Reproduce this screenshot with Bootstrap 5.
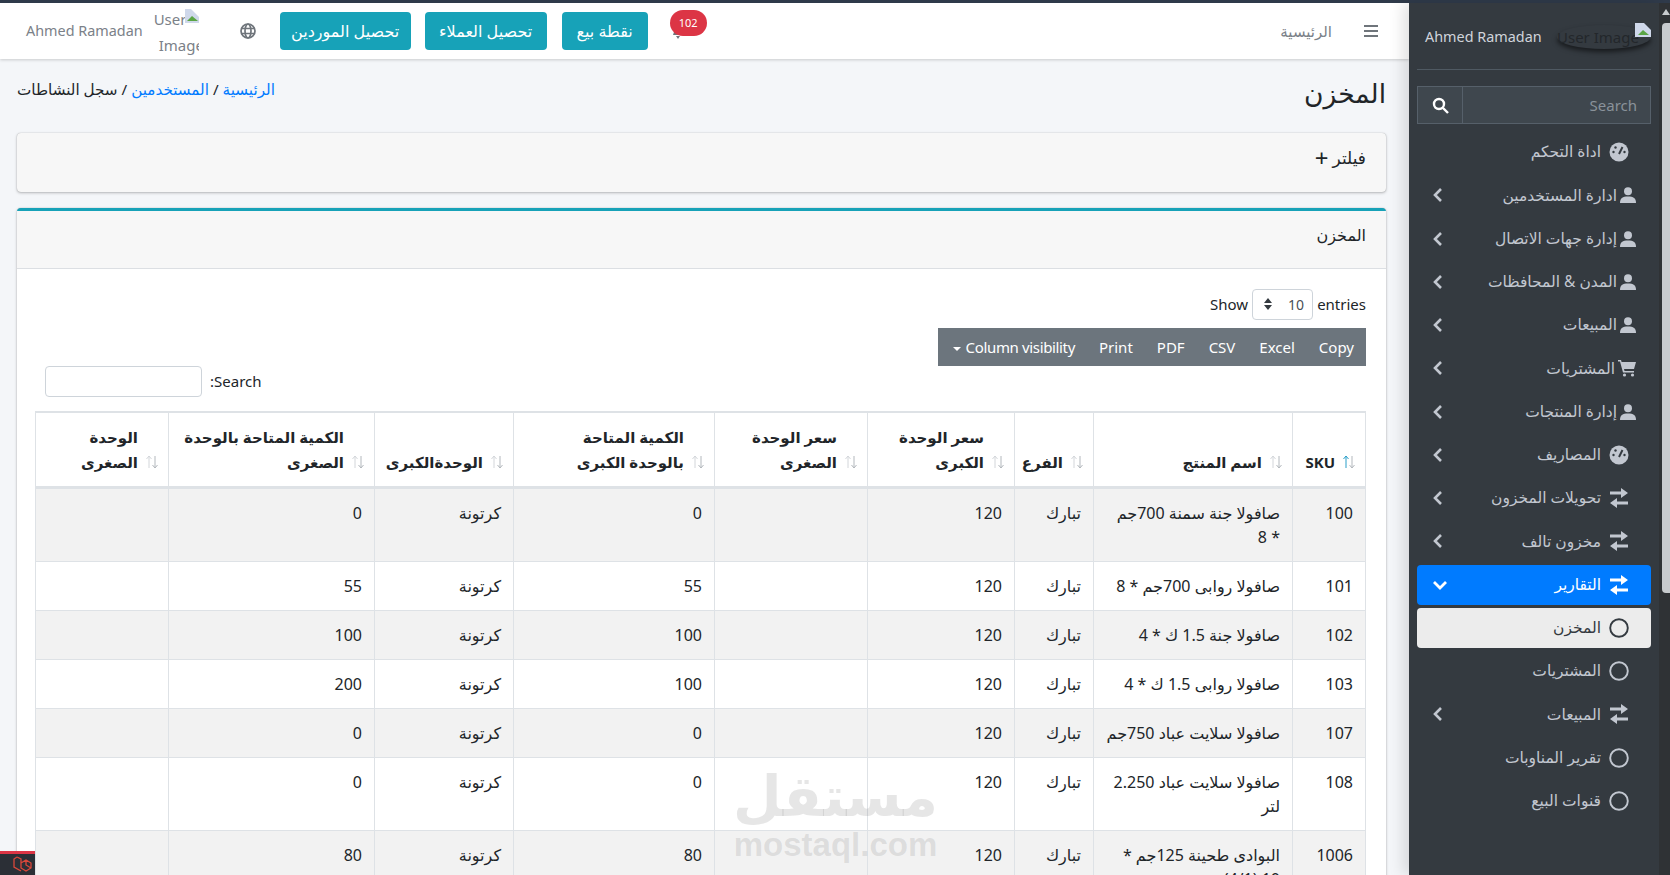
<!doctype html>
<html lang="ar" dir="rtl">
<head>
<meta charset="utf-8">
<link rel="stylesheet" href="https://cdn.jsdelivr.net/npm/bootstrap@5.3.0/dist/css/bootstrap.min.css">
<style>
html,body{height:100%;overflow:hidden}
body{font-family:"Noto Sans","DejaVu Sans",sans-serif;font-size:15px;color:#212529;background:#f4f6f9}
.ltr{direction:ltr}
.topline{height:3px;background:#2f3a4a}
.shell{height:872px}
.fakebar{width:11px;background:#2f3235;flex:none;position:relative;z-index:6}
.fakebar i{position:absolute;top:20px;left:3px;width:8px;height:570px;background:#c8cbce;border-radius:4px 0 0 4px}
.fakebar u{position:absolute;top:6px;left:3px;border:4px solid transparent;border-bottom:6px solid #c8cbce;border-top:0}
.side{width:250px;background:#343a40;flex:none;color:#c2c7d0;padding:0 8px;position:relative;z-index:5;box-shadow:-6px 0 14px rgba(0,0,0,.12)}
.side-user{height:67px;border-bottom:1px solid #4f5962;padding:2px 0 0 0}
.side-user .who{color:#d0d4db;font-size:14.4px;direction:ltr}
.side-alt{width:94px;height:24px;border-radius:50%;box-shadow:0 3px 5px rgba(0,0,0,.55);font-size:15px;color:#23272b;white-space:nowrap;position:relative}
.side-alt svg{position:absolute;right:0;top:-2px}
.side-search{height:38px;margin:16px 0 8px;border:1px solid #56606a;background:#3f474e;color:#8a929a}
.side-search .sb{width:45px;flex:none;border-right:1px solid #56606a}
.side-search .st{padding:0 13px 0 0;font-size:15px;text-align:left;direction:ltr;flex:1}
.sitem{height:40px;margin-bottom:3.25px;padding:0 22px 0 16px;border-radius:4px;color:#c2c7d0;font-size:15.5px}
.sitem svg.ic{flex:none}
.sitem .lbl{margin-right:8px;flex:1;white-space:nowrap}
.sitem.kindu{padding-right:15px}
.sitem.kindu .lbl{margin-right:3px}
.sitem.on{background:#007bff;color:#fff}
.sitem.cur{background:#ececec;color:#343a40}
.main{flex:1;min-width:0;position:relative;overflow:hidden}
.tnav{height:56px;background:#fff;box-shadow:0 1px 3px rgba(0,0,0,.18);padding:0 30px 0 26px;position:relative;z-index:2}
.tnav .home{color:#7b8188;margin-right:32px;font-size:15px}
.tbtn{background:#17a2b8;color:#fff;border-radius:4px;height:38px;padding:0;font-size:16px;border:0}
.tb1{width:86px;margin-left:15px}.tb2{width:122px;margin-left:14px}.tb3{width:131px}
.bell{width:37px;height:26px;position:relative;margin-left:22px}
.bellbadge{background:#dc3545;color:#fff;font-size:11px;height:26px;width:37px;border-radius:13px;position:absolute;left:0;top:-8px}
.bellmini{position:absolute;left:3px;top:9px}
.globe{margin:0 24px 0 41px}
.pagehd{padding:19px 23px 0 17px;height:74px}
.pagehd h1{font-size:26.5px;font-weight:400;margin:0;color:#212529}
.crumb{font-size:15.2px;color:#212529;margin-top:0}
.crumb a{color:#007bff;text-decoration:none}
.boxc{margin:0 23px 16px 17px;background:#fff;border-radius:4px;box-shadow:0 0 1px rgba(0,0,0,.3),0 1px 3px rgba(0,0,0,.25)}
.filterbox{height:59px;background:#f7f7f7;padding:0 20px 9px;font-size:17px}
.tealbox{border-top:3px solid #17a2b8}
.boxhead{height:58px;background:#f7f7f7;border-bottom:1px solid #dcdfe3;padding:0 20px 10px;font-size:16px}
.boxbody{padding:17px 20px 0 19px}
.lenrow{height:36px;font-size:15px}
.lensel{width:61px;height:31px;border:1px solid #ced4da;border-radius:4px;margin:0 4px;padding:0 8px 0 11px;color:#495057;font-size:14px}
.dtbtns{background:#6c757d;color:#fff;height:38px;width:428px;margin:6px 0 0 0;padding:0 12px;font-size:15px;gap:24px;white-space:nowrap}
.colvis{letter-spacing:-.35px}
.caretd{display:inline-block;width:0;height:0;border:4px solid transparent;border-top-color:#fff;border-bottom:0;margin-right:5px;vertical-align:middle}
.srow{height:31px;padding-left:9px}
.srow .sinput{width:157px;height:31px;border:1px solid #ced4da;border-radius:4px;background:#fff}
.srow .sl{font-size:15px;direction:ltr}
.wrap-t{margin:0 0 0 -3px;padding-top:14px}
table.rep{table-layout:fixed;width:1330px;border-collapse:collapse;margin:0;font-size:16px}
table.rep th,table.rep td{border:1px solid #dee2e6;padding:12px;vertical-align:top;font-weight:400;line-height:24px}
table.rep thead th{border-bottom:3px solid #dee2e6;border-top:2px solid #dee2e6;font-size:15px;font-weight:700;vertical-align:bottom;position:relative;padding:12px 30px 12px 8px;background:#fff;color:#212529;line-height:24.5px}
table.rep tbody tr:nth-child(odd) td{background:#f2f2f2}
table.rep tbody tr:nth-child(even) td{background:#fff}
.c1{width:73px}.c2{width:199px}.c3{width:79px}.c4{width:147px}.c5{width:153px}.c6{width:201px}.c7{width:139px}.c8{width:206px}.c9{width:133px}
.sorter{position:absolute;right:9px;bottom:17px;fill:none}
.sorter .up{stroke:#d3d6da}
.sorter .dn{stroke:#b3b8bd}
.sorter .act{stroke:#2b9fc9}
.stamp{position:absolute;left:733px;top:750px;width:205px;text-align:center;color:rgba(130,130,130,.2);pointer-events:none;z-index:3;line-height:1}
.stamp .sa{font-size:56px;font-weight:700;display:block;line-height:88px;font-family:"DejaVu Sans",sans-serif}
.stamp .sb2{font-size:33px;font-weight:700;display:block;font-family:"Liberation Sans",sans-serif;direction:ltr;margin-top:-13px}
.dbg{position:absolute;left:0;bottom:0;width:35px;height:24px;background:#2b2f36;border-top:3px solid #dc3545;z-index:4}
.altbox{width:48px;height:56px;color:#7b8188;font-size:15px;line-height:26px;direction:ltr;position:relative;overflow:hidden;margin-left:8px;padding-top:3px}
.altbox span{display:block;white-space:nowrap}
.altbox .a1{padding-left:3px}
.altbox .a2{padding-left:8px}
.altbox svg{position:absolute;top:6px;right:0}
.uname{color:#7b8188;direction:ltr;font-size:14.4px}
</style>
</head>
<body>
<div class="topline"></div>
<div class="shell d-flex flex-row">
  <div class="fakebar"><u></u><i></i></div>
  <aside class="side">
    <div class="side-user d-flex align-items-center justify-content-between ltr">
      <span class="who ps-2">Ahmed Ramadan</span>
      <span class="side-alt d-flex align-items-center">User Image<svg width="16" height="14" viewBox="0 0 16 14"><path d="M0 0h9l7 7v7H0z" fill="#cfd8ea"/><path d="M3 12l5-5 6 5z" fill="#5aa545"/></svg></span>
    </div>
    <div class="side-search d-flex ltr">
      <span class="sb d-flex align-items-center justify-content-center"><svg width="17" height="17" viewBox="0 0 17 17" fill="none" stroke="#fff" stroke-width="2.4"><circle cx="7" cy="7" r="5"/><path d="M11 11l5 5"/></svg></span>
      <span class="st d-flex align-items-center justify-content-end">Search</span>
    </div>
    <div id="menu"></div>
  </aside>
  <main class="main">
    <nav class="tnav d-flex align-items-center">
      <svg width="15" height="13" viewBox="0 0 15 13" fill="#6f757b"><rect y="0" width="14" height="2"/><rect y="5" width="14" height="2"/><rect y="10" width="14" height="2"/></svg>
      <span class="home">الرئيسية</span>
      <div class="d-flex align-items-center me-auto">
        <span class="bell"><svg class="bellmini" width="10" height="12" viewBox="0 0 10 12" fill="#6f757b"><path d="M5 0c3 0 4 2 4 5l1 3H0l1-3c0-3 1-5 4-5zM3 9h4l-2 3z"/></svg><span class="bellbadge d-flex align-items-center justify-content-center">102</span></span>
        <button class="tbtn tb1">نقطة بيع</button>
        <button class="tbtn tb2">تحصيل العملاء</button>
        <button class="tbtn tb3">تحصيل الموردين</button>
        <svg class="globe" width="16" height="16" viewBox="0 0 16 16" fill="none" stroke="#6f757b" stroke-width="1.7"><circle cx="8" cy="8" r="7"/><ellipse cx="8" cy="8" rx="3" ry="7"/><path d="M1 5.500h14M1 10.500h14"/></svg>
        <span class="altbox"><span class="a1">User</span> <span class="a2">Image</span><svg width="14" height="14" viewBox="0 0 14 14"><path d="M0 0h6l8 8v6H0z" fill="#cfd8ea"/><path d="M2 12l5-5 6 5z" fill="#5aa545"/></svg></span>
        <span class="uname">Ahmed Ramadan</span>
      </div>
    </nav>
    <div class="pagehd d-flex justify-content-between align-items-start">
      <h1>المخزن</h1>
      <div class="crumb"><a href="#">الرئيسية</a> / <a href="#">المستخدمين</a> / سجل النشاطات</div>
    </div>
    <div class="boxc filterbox d-flex align-items-center">فيلتر <span class="fs-4 lh-1 me-1">+</span></div>
    <div class="boxc tealbox">
      <div class="boxhead d-flex align-items-center">المخزن</div>
      <div class="boxbody">
        <div class="lenrow d-flex align-items-center ltr justify-content-end">Show <span class="lensel d-flex align-items-center justify-content-between"><svg width="8" height="12" viewBox="0 0 8 12" fill="#343a40"><path d="M4 0l4 5H0zM4 12l4-5H0z"/></svg>10</span> entries</div>
        <div class="d-flex">
          <div class="dtbtns d-flex align-items-center ltr justify-content-end">
            <span class="colvis"><span class="caretd"></span>Column visibility</span><span>Print</span><span>PDF</span><span>CSV</span><span>Excel</span><span>Copy</span>
          </div>
        </div>
        <div class="srow d-flex align-items-center justify-content-start ltr mt-0"><span class="sinput"></span><span class="sl ms-2">:Search</span></div>
        <div class="wrap-t">
        <table class="rep">
          <colgroup><col class="c1"><col class="c2"><col class="c3"><col class="c4"><col class="c5"><col class="c6"><col class="c7"><col class="c8"><col class="c9"></colgroup>
          <thead><tr id="hdr">
            <th>SKU</th>
            <th>اسم المنتج</th>
            <th>الفرع</th>
            <th>سعر الوحدة<br>الكبرى</th>
            <th>سعر الوحدة<br>الصغرى</th>
            <th>الكمية المتاحة<br>بالوحدة الكبرى</th>
            <th>الوحدةالكبرى</th>
            <th>الكمية المتاحة بالوحدة<br>الصغرى</th>
            <th>الوحدة<br>الصغرى</th>
          </tr></thead>
          <tbody>
            <tr><td>100</td><td>صافولا جنة سمنة 700جم * 8</td><td>تبارك</td><td>120</td><td></td><td>0</td><td>كرتونة</td><td>0</td><td></td></tr>
            <tr><td>101</td><td>صافولا روابى 700جم * 8</td><td>تبارك</td><td>120</td><td></td><td>55</td><td>كرتونة</td><td>55</td><td></td></tr>
            <tr><td>102</td><td>صافولا جنة 1.5 ك * 4</td><td>تبارك</td><td>120</td><td></td><td>100</td><td>كرتونة</td><td>100</td><td></td></tr>
            <tr><td>103</td><td>صافولا روابى 1.5 ك * 4</td><td>تبارك</td><td>120</td><td></td><td>100</td><td>كرتونة</td><td>200</td><td></td></tr>
            <tr><td>107</td><td>صافولا سلايت عباد 750جم</td><td>تبارك</td><td>120</td><td></td><td>0</td><td>كرتونة</td><td>0</td><td></td></tr>
            <tr><td>108</td><td>صافولا سلايت عباد 2.250 لتر</td><td>تبارك</td><td>120</td><td></td><td>0</td><td>كرتونة</td><td>0</td><td></td></tr>
            <tr><td>1006</td><td>البوادى طحينة 125جم * 10 (4/1)</td><td>تبارك</td><td>120</td><td></td><td>80</td><td>كرتونة</td><td>80</td><td></td></tr>
          </tbody>
        </table>
        </div>
      </div>
    </div>
    <div class="stamp"><span class="sa">مستقل</span><span class="sb2">mostaql.com</span></div>
    <div class="dbg"><svg width="24" height="20" viewBox="0 0 24 20" fill="none" stroke="#d9473a" stroke-width="1.3" class="d-block"><path d="M6 3l4 2v9l5 3 5-3V9l-5-3-5 3M6 3L3 5v8l7 4M15 6v5l5 3"/></svg></div>
  </main>
</div>
<script>
document.querySelectorAll('#hdr th').forEach(function(th,n){
 th.insertAdjacentHTML('beforeend','<svg class="sorter" width="14" height="14" viewBox="0 0 14 14"><path class="'+(n==0?'act':'up')+'" d="M4 13V1M1.500 4L4 1l2.500 3"/><path class="dn" d="M10 1v12M7.500 10l2.500 3 2.500-3"/></svg>');
});
var dash='<circle cx="10" cy="10" r="9.500" fill="currentColor"/><path d="M10 12l3.500-7" stroke="#343a40" stroke-width="2"/><circle cx="4.500" cy="10" r="1.200" fill="#343a40"/><circle cx="6.500" cy="5.500" r="1.200" fill="#343a40"/><circle cx="15.500" cy="10" r="1.200" fill="#343a40"/>';
var user='<circle cx="8" cy="4.200" r="4" fill="currentColor"/><path d="M0 16c0-5 2.500-6.500 8-6.500s8 1.500 8 6.500z" fill="currentColor"/>';
var cart='<path d="M0 1h3l.6 2H18l-2 7H6l.5 2H16v1.500H5L2 2.500H0z" fill="currentColor"/><circle cx="6.500" cy="16" r="1.600" fill="currentColor"/><circle cx="14.500" cy="16" r="1.600" fill="currentColor"/>';
var swap='<path d="M1 3.500h11V0l7 5-7 5V6.500H1z" fill="currentColor"/><path d="M19 13.500H8V10l-7 5 7 5v-3.500h11z" fill="currentColor"/>';
var circ='<circle cx="10" cy="10" r="8.800" fill="none" stroke="currentColor" stroke-width="1.900"/>';
var items=[[dash,'اداة التحكم',0],[user,'ادارة المستخدمين',1,'u'],[user,'إدارة جهات الاتصال',1,'u'],[user,'المدن &amp; المحافظات',1,'u'],[user,'المبيعات',1,'u'],[cart,'المشتريات',1,'c'],[user,'إدارة المنتجات',1,'u'],[dash,'المصاريف',1],[swap,'تحويلات المخزون',1],[swap,'مخزون تالف',1],[swap,'التقارير',2,'','on'],[circ,'المخزن',0,'','cur'],[circ,'المشتريات',0],[swap,'المبيعات',1],[circ,'تقرير المناوبات',0],[circ,'قنوات البيع',0]];
var h='';
items.forEach(function(i){
 var chev=i[2]==1?'<svg width="10" height="14" viewBox="0 0 10 14" fill="none" stroke="currentColor" stroke-width="2.600"><path d="M8 1L2 7l6 6"/></svg>':i[2]==2?'<svg width="14" height="10" viewBox="0 0 14 10" fill="none" stroke="#fff" stroke-width="2.800"><path d="M1 2l6 6 6-6"/></svg>':'';
 var w=i[3]=='u'?16:(i[3]=='c'?18:20), vb=i[3]=='u'?'0 0 16 16':(i[3]=='c'?'0 0 18 18':'0 0 20 20');
 h+='<div class="sitem d-flex align-items-center '+(i[3]?'kindu ':'')+(i[4]||'')+'"><svg class="ic" width="'+w+'" height="'+w+'" viewBox="'+vb+'">'+i[0]+'</svg><span class="lbl">'+i[1]+'</span>'+chev+'</div>';
});
document.getElementById('menu').innerHTML=h;
</script>
<script src="https://cdn.jsdelivr.net/npm/bootstrap@5.3.0/dist/js/bootstrap.bundle.min.js"></script>
</body>
</html>
